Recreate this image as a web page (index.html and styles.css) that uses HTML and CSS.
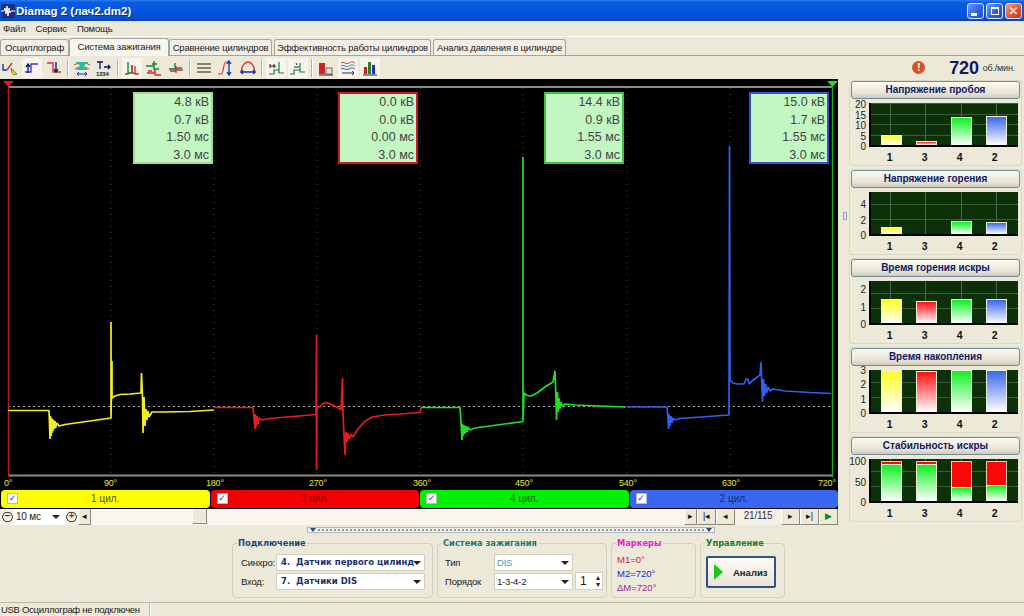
FILE: index.html
```html
<!DOCTYPE html>
<html>
<head>
    <meta charset="utf-8">
    <title>Diamag 2</title>
    <link rel="stylesheet" href="styles.css">
</head>
<body>
    <div class="titlebar">
        <svg class="appicon" width="14" height="14" viewBox="0 0 14 14"><rect width="14" height="14" fill="#1c2f78"/><path d="M0 7H3L4 4 5 10 6 2 7 12 8 4 9 9 10 7H14" stroke="#fff" fill="none"/></svg>
        <span class="title">Diamag 2 (лач2.dm2)</span>
        <div class="winbtns">
            <div class="winbtn"><i class="min"></i></div>
            <div class="winbtn"><i class="max"></i></div>
            <div class="winbtn close">✕</div>
        </div>
    </div>
    <div class="menu"><span>Файл</span><span>Сервис</span><span>Помощь</span></div>
    <div class="tabs">
        <div class="tab t1">Осциллограф</div>
        <div class="tab t2 active">Система зажигания</div>
        <div class="tab t3">Сравнение цилиндров</div>
        <div class="tab t4">Эффективность работы цилиндров</div>
        <div class="tab t5">Анализ давления в цилиндре</div>
    </div>
    <div class="toolbar">
        <div class="tools">
            <svg class="ico" viewBox="0 0 16 16"><path d="M1 4V10H5" stroke="#2030c0" fill="none" stroke-width="1.4"/><path d="M5 10L10 3" stroke="#d03030" fill="none" stroke-width="1.4"/><path d="M9 8L15 14 12 15 10 13Z" fill="#f0d020" stroke="#555" stroke-width=".7"/></svg>
            <svg class="ico on" viewBox="0 0 16 16"><path d="M1 12H7V4H14" stroke="#3040d0" fill="none" stroke-width="1.4"/><path d="M4 13V5M2 7L4 4 6 7" stroke="#101060" fill="none" stroke-width="1.3"/></svg>
            <svg class="ico" viewBox="0 0 16 16"><path d="M1 3H7V12H15" stroke="#e03030" fill="none" stroke-width="1.4"/><path d="M10 2V11M8 9L10 12 12 9" stroke="#101060" fill="none" stroke-width="1.3"/></svg>
            <i class="sep"></i>
            <svg class="ico" viewBox="0 0 16 16"><path d="M2 2H14L10 6 14 10H2L6 6Z" fill="#20c0a0"/><path d="M0 5L4 3M16 5L12 3M1 9L5 7M15 9L11 7" stroke="#d04040"/><path d="M3 14H13M3 14L5 12M3 14L5 15.500M13 14L11 12M13 14L11 15.500" stroke="#1030c0" fill="none"/></svg>
            <svg class="ico" viewBox="0 0 16 16"><path d="M1 2H7M4 2V9M8 7H14M12 5L14 7 12 9" stroke="#101060" fill="none" stroke-width="1.3"/><text x="0" y="15.500" class="tinytext">1234</text></svg>
            <i class="sep"></i>
            <svg class="ico on" viewBox="0 0 16 16"><path d="M1 14H4V2V13H8V5" stroke="#108030" fill="none" stroke-width="1.3"/><path d="M8 5V13H11V6V14H15" stroke="#d03030" fill="none" stroke-width="1.3"/></svg>
            <svg class="ico" viewBox="0 0 16 16"><path d="M0 6H8V1V9H13M6 4H11" stroke="#108030" fill="none" stroke-width="1.3"/><path d="M1 13H8L9 10V15H15M2 11H6" stroke="#d03030" fill="none" stroke-width="1.3"/></svg>
            <svg class="ico" viewBox="0 0 16 16"><path d="M1 9H7V3V8H14" stroke="#108030" fill="none" stroke-width="1.3"/><path d="M2 11H8V6V13M8 10H15" stroke="#d03030" fill="none" stroke-width="1.3"/></svg>
            <i class="sep"></i>
            <svg class="ico" viewBox="0 0 16 16"><path d="M1 4H15M1 8H15M1 12H15" stroke="#665f50" stroke-width="1.5"/></svg>
            <svg class="ico" viewBox="0 0 16 16"><path d="M0 14H3C6 14 5 2 8 2H12" stroke="#e03030" fill="none" stroke-width="1.2"/><path d="M11 2V14M9 4L11 1 13 4M9 12L11 15 13 12" stroke="#1030c0" fill="none" stroke-width="1.3"/></svg>
            <svg class="ico" viewBox="0 0 16 16"><path d="M1 13C2 4 5 2 8 2S14 4 15 13" stroke="#e03030" fill="none" stroke-width="1.3"/><path d="M1 12H15M3 10L1 12 3 14M13 10L15 12 13 14" stroke="#1030c0" fill="none" stroke-width="1.3"/></svg>
            <i class="sep"></i>
            <svg class="ico on" viewBox="0 0 16 16"><path d="M1 14H6V10H11V2V13H16" stroke="#108050" fill="none" stroke-width="1.2"/><path d="M2 4V8M6 4V8M2 6H8" stroke="#202020" fill="none"/></svg>
            <svg class="ico on" viewBox="0 0 16 16"><path d="M0 14H4V10H10V3V12H15" stroke="#108050" fill="none" stroke-width="1.2"/><path d="M4 7H9M6 3L7 5" stroke="#202020" fill="none"/></svg>
            <i class="sep"></i>
            <svg class="ico" viewBox="0 0 16 16"><rect x="1" y="3" width="6" height="11" fill="#d02020"/><rect x="8" y="8" width="6" height="6" fill="#e8e4d4" stroke="#333" stroke-width=".7"/><path d="M1 15H15" stroke="#222"/></svg>
            <svg class="ico on" viewBox="0 0 16 16"><path d="M1 3C4 1 6 5 9 3S13 2 15 3" stroke="#d04050" fill="none"/><path d="M1 6C4 4 6 8 9 6S13 5 15 6" stroke="#30a060" fill="none"/><path d="M1 9C4 7 6 11 9 9S13 8 15 9" stroke="#4040d0" fill="none"/><path d="M2 13H14M12 11L14 13 12 15" stroke="#333" fill="none"/></svg>
            <svg class="ico on" viewBox="0 0 16 16"><rect x="2" y="7" width="3" height="7" fill="#d02020"/><rect x="6" y="2" width="3" height="12" fill="#208030"/><rect x="10" y="5" width="3" height="9" fill="#2030c0"/><path d="M1 15H15" stroke="#222"/></svg>
        </div>
        <div class="rpm">
            <span class="warn">!</span>
            <b>720</b>
            <small>об./мин.</small>
        </div>
    </div>

    <div class="main">
        <div class="scopecol">
            <div class="scope">
                <svg class="wave" width="838" height="410" viewBox="0 79 838 410">
                    <path d="M8 87H832M8 475.500H832" stroke="#8a8a8a" stroke-width="2"/>
                    <path d="M111 88V475M214 88V475M317 88V475M420.500 88V475M523 88V475M627 88V475M730 88V475" stroke="#4c4c4c" stroke-dasharray="1 5"/>
                    <path d="M8 406.500H832" stroke="#b0b0b0" stroke-dasharray="2 3"/>
                    <path d="M8.500 87V476" stroke="#c01818" stroke-width="1.400"/>
                    <path d="M832.500 87V477" stroke="#18b018" stroke-width="1.400"/>
                    <path d="M3 81H14L8.500 87Z" fill="#e01818"/>
                    <path d="M827 81H838L832.500 87Z" fill="#20e020"/>
                    <path class="sig" stroke="#f0f020" d="M8 410.500H49L49.500 424 50 439 50.500 416 51 436 51.500 418 52 433 52.500 419 53 431 53.500 420 54 429 55 421 55.500 428 57 423 59 426 65 424.500 111 418 111 322 111 418 112 361 112 398 115 396 120 394.500 130 394 141 393 141.500 373 142.500 398 143 433 144 397 145 426 146 409 147 420 148 411 149 417 152 412 160 412 190 411.500 214 410"/>
                    <path class="sig" stroke="#e81c1c" d="M214 407.500H253L254 418 255 429 255.500 414 256 427 257 416 258 424 259 418 262 420 270 418.500 316 414.500 316.500 335 316.500 470 317 407 320 407 323 403.500 326 402.500 330 404 336 406.500 341 410 342.500 378 343 414 345 455 346 432 347 442 348 433 349 439 351 434 353 437 358 429 364 422 372 417 385 415 400 414 420 412.500 421 408"/>
                    <path class="sig" stroke="#20e020" d="M421 407.500H460L461 422 462 440 462.500 424 463 436 464 425 465 434 466 426 467 432 468 427 470 430 475 428 523 421.500 523 157 523 420 524 393 527 395.500 531 396 537 393 541 390 545 387 548 385 553 382 555 371 556 400 556.500 420 557.500 392 558 412 559 398 560 409 561 402 562 406 565 404 575 405 600 406 626 407"/>
                    <path class="sig" stroke="#3060f0" d="M627 407H667L668 418 668.500 429 669 414 670 426 671 416 672 423 673 418 675 420 680 418.500 729 415 729.500 146 730 380 733 383 737 384 744 384 746 379 748 379 749 384 752 381 760 375 761 362 762 390 762.500 402 763.500 379 764.500 396 765.500 384 766.500 393 768 387 770 391 773 389 785 391 810 392.500 831 393.500"/>
                    <g class="deg">
                        <text x="4" y="486">0°</text>
                        <text x="104" y="486">90°</text>
                        <text x="206" y="486">180°</text>
                        <text x="309" y="486">270°</text>
                        <text x="413" y="486">360°</text>
                        <text x="515" y="486">450°</text>
                        <text x="619" y="486">540°</text>
                        <text x="722" y="486">630°</text>
                        <text x="818" y="486">720°</text>
                    </g>
                </svg>
                <div class="info i1"><p>4.8 кВ</p><p>0.7 кВ</p><p>1.50 мс</p><p>3.0 мс</p></div>
                <div class="info i2"><p>0.0 кВ</p><p>0.0 кВ</p><p>0.00 мс</p><p>3.0 мс</p></div>
                <div class="info i3"><p>14.4 кВ</p><p>0.9 кВ</p><p>1.55 мс</p><p>3.0 мс</p></div>
                <div class="info i4"><p>15.0 кВ</p><p>1.7 кВ</p><p>1.55 мс</p><p>3.0 мс</p></div>
            </div>
            <div class="cyls">
                <div class="cyl yellow"><i class="check">✓</i>1 цил.</div>
                <div class="cyl red"><i class="check">✓</i>3 цил.</div>
                <div class="cyl green"><i class="check">✓</i>4 цил.</div>
                <div class="cyl blue"><i class="check">✓</i>2 цил.</div>
            </div>
            <div class="scrollrow">
                <div class="zoombtn">−</div>
                <div class="msbox">10 мс<i class="arrow"></i></div>
                <div class="zoombtn plus">+</div>
                <div class="navbtn small">◂</div>
                <div class="track"><div class="thumb"></div></div>
                <div class="navbtn small">▸</div>
                <div class="navbtn">|◂</div>
                <div class="navbtn">◂</div>
                <div class="pos">21/115</div>
                <div class="navbtn">▸</div>
                <div class="navbtn">▸|</div>
                <div class="navbtn play">▶</div>
            </div>
        </div>
        <div class="vsplit"><i></i></div>
        <div class="charts">
            <div class="card">
                <div class="cardbtn">Напряжение пробоя</div>
                <div class="chart">
                    <div class="yaxis top-a"><span>20</span><span>15</span><span>10</span><span>5</span><span>0</span></div>
                    <div class="plot rows-a">
                        <div class="bar b-y" style="height:10px"></div>
                        <div class="bar b-r" style="height:4px"></div>
                        <div class="bar b-g" style="height:28px"></div>
                        <div class="bar b-b" style="height:29px"></div>
                    </div>
                </div>
                <div class="xaxis"><span>1</span><span>3</span><span>4</span><span>2</span></div>
            </div>
            <div class="card">
                <div class="cardbtn">Напряжение горения</div>
                <div class="chart">
                    <div class="yaxis top-b"><span>4</span><span>2</span><span>0</span></div>
                    <div class="plot rows-b">
                        <div class="bar b-y" style="height:7px"></div>
                        <div class="bar none"></div>
                        <div class="bar b-g" style="height:13px"></div>
                        <div class="bar b-b" style="height:12px"></div>
                    </div>
                </div>
                <div class="xaxis"><span>1</span><span>3</span><span>4</span><span>2</span></div>
            </div>
            <div class="card">
                <div class="cardbtn">Время горения искры</div>
                <div class="chart">
                    <div class="yaxis top-c"><span>2</span><span>1</span><span>0</span></div>
                    <div class="plot rows-c">
                        <div class="bar b-y" style="height:24px"></div>
                        <div class="bar b-r" style="height:22px"></div>
                        <div class="bar b-g" style="height:24px"></div>
                        <div class="bar b-b" style="height:24px"></div>
                    </div>
                </div>
                <div class="xaxis"><span>1</span><span>3</span><span>4</span><span>2</span></div>
            </div>
            <div class="card">
                <div class="cardbtn">Время накопления</div>
                <div class="chart">
                    <div class="yaxis top-d"><span>3</span><span>2</span><span>1</span><span>0</span></div>
                    <div class="plot rows-d">
                        <div class="bar b-y" style="height:42px"></div>
                        <div class="bar b-r" style="height:41px"></div>
                        <div class="bar b-g" style="height:42px"></div>
                        <div class="bar b-b" style="height:42px"></div>
                    </div>
                </div>
                <div class="xaxis"><span>1</span><span>3</span><span>4</span><span>2</span></div>
            </div>
            <div class="card">
                <div class="cardbtn">Стабильность искры</div>
                <div class="chart">
                    <div class="yaxis top-e"><span>100</span><span>50</span><span>0</span></div>
                    <div class="plot rows-e">
                        <div class="stack"><div class="bad" style="height:3px"></div><div class="bar b-g" style="height:37px"></div></div>
                        <div class="stack"><div class="bad" style="height:3px"></div><div class="bar b-g" style="height:37px"></div></div>
                        <div class="stack"><div class="bad" style="height:26px"></div><div class="bar b-g" style="height:14px"></div></div>
                        <div class="stack"><div class="bad" style="height:24px"></div><div class="bar b-g" style="height:16px"></div></div>
                    </div>
                </div>
                <div class="xaxis"><span>1</span><span>3</span><span>4</span><span>2</span></div>
            </div>
        </div>
    </div>

    <div class="hsplit"><i class="down"></i><span></span><i class="down"></i></div>

    <div class="panels">
        <fieldset class="group g-conn">
            <legend>Подключение</legend>
            <div class="row"><label>Синхро:</label><div class="select strong"><span>4.&nbsp; Датчик первого цилинд</span><i class="arrow"></i></div></div>
            <div class="row"><label>Вход:</label><div class="select strong"><span>7.&nbsp; Датчики DIS</span><i class="arrow"></i></div></div>
        </fieldset>
        <fieldset class="group g-ign">
            <legend>Система зажигания</legend>
            <div class="row"><label>Тип</label><div class="select short dis"><span>DIS</span><i class="arrow"></i></div></div>
            <div class="row"><label>Порядок</label><div class="select short"><span>1-3-4-2</span><i class="arrow"></i></div><div class="spin">1<em>▴<br>▾</em></div></div>
        </fieldset>
        <fieldset class="group g-mark">
            <legend>Маркеры</legend>
            <p class="m1">M1=0°</p>
            <p class="m2">M2=720°</p>
            <p class="m3">ΔM=720°</p>
        </fieldset>
        <fieldset class="group g-ctl">
            <legend>Управление</legend>
            <div class="runbtn"><i></i><b>Анализ</b></div>
        </fieldset>
    </div>

    <div class="status"><div class="cell">USB Осциллограф не подключен</div><div class="cell rest"></div></div>
</body>
</html>
```
FILE: styles.css
```css
* {
    box-sizing: border-box;
}
html, body {
    margin: 0;
    height: 100%;
}
body {
    width: 1024px;
    height: 616px;
    overflow: hidden;
    background: #ece9d8;
    color: #222;
    font-family: "Liberation Sans", Arial, sans-serif;
    font-size: 9.500px;
    letter-spacing: -.2px;
}
i, em {
    font-style: normal;
}

/* window title */
.titlebar {
    height: 21px;
    display: flex;
    align-items: center;
    padding: 0 2px 0 1px;
    background: linear-gradient(#2a7cf0 0, #0a5be0 12%, #0356e0 60%, #0a4cc8 92%, #0a3fa8 100%);
    color: #fff;
}
.appicon {
    margin-right: 1px;
}
.title {
    font-weight: bold;
    font-size: 11.500px;
    letter-spacing: 0;
    text-shadow: 1px 1px #0a2a90;
}
.winbtns {
    margin-left: auto;
    display: flex;
    gap: 2px;
}
.winbtn {
    width: 17px;
    height: 16px;
    border: 1px solid #dbe6ff;
    border-radius: 3px;
    background: linear-gradient(135deg, #6f98f2, #2c5fe0 60%, #2450c8);
    position: relative;
}
.winbtn .min {
    position: absolute;
    left: 3px;
    bottom: 2px;
    width: 6px;
    height: 3px;
    background: #fff;
}
.winbtn .max {
    position: absolute;
    left: 4px;
    top: 3px;
    width: 8px;
    height: 8px;
    border: 1px solid #fff;
    border-top-width: 2px;
}
.close {
    background: linear-gradient(135deg, #f0a080, #e05030 60%, #c03818);
    color: #fff;
    font-size: 12px;
    line-height: 14px;
    text-align: center;
    font-family: "DejaVu Sans", sans-serif;
    font-weight: bold;
}

/* menu + tabs */
.menu {
    height: 16px;
    display: flex;
    align-items: center;
    gap: 10px;
    padding-left: 3px;
    border-bottom: 1px solid #fff;
}
.tabs {
    height: 19px;
    display: flex;
    align-items: flex-end;
    padding-top: 2px;
    border-bottom: 1px solid #a8a498;
}
.tab {
    height: 16px;
    line-height: 15px;
    text-align: center;
    border: 1px solid #a8a498;
    border-bottom: 0;
    border-radius: 3px 3px 0 0;
    background: #f2f0e6;
    white-space: nowrap;
}
.t1 {
    width: 69px;
}
.t2 {
    width: 100px;
}
.t3 {
    width: 103px;
    margin-right: 2px;
}
.t4 {
    width: 157px;
    margin-right: 2px;
}
.t5 {
    width: 133px;
}
.tab.active {
    height: 18px;
    line-height: 16px;
    background: #f7f6ee;
    margin-bottom: -1px;
    position: relative;
}

/* toolbar */
.toolbar {
    height: 23px;
    display: flex;
    align-items: center;
    justify-content: space-between;
    padding-left: 2px;
}
.tools {
    display: flex;
    align-items: center;
    gap: 6px;
}
.ico {
    width: 16px;
    height: 16px;
}
.ico.on {
    background: #f6f4ec;
    outline: 2px solid #f6f4ec;
}
.tinytext {
    font-size: 6px;
    font-weight: bold;
    fill: #222;
}
.sep {
    width: 2px;
    height: 18px;
    margin: 0 -1px;
    background: #b8b4a4;
    border-right: 1px solid #fff;
}
.rpm {
    display: flex;
    align-items: center;
    padding-right: 9px;
}
.warn {
    width: 13px;
    height: 13px;
    border-radius: 50%;
    background: #d85020;
    color: #fff;
    font-weight: bold;
    font-size: 11px;
    line-height: 13px;
    text-align: center;
    margin-right: 24px;
}
.rpm b {
    font-size: 18px;
    line-height: 22px;
    color: #101868;
    margin-right: 4px;
}
.rpm small {
    font-size: 9px;
    color: #333;
}

/* main area */
.main {
    height: 446px;
    display: flex;
}
.scopecol {
    width: 838px;
    display: flex;
    flex-direction: column;
}
.scope {
    height: 410px;
    background: #000;
    position: relative;
}
.wave {
    display: block;
}
.sig {
    fill: none;
    stroke-width: 1.700;
    stroke-linejoin: bevel;
}
.deg text {
    fill: #e4e440;
    font-size: 9px;
}
.info {
    position: absolute;
    top: 13px;
    width: 80px;
    height: 72px;
    padding: 0 2px 0 0;
    background: #c2f7c2;
    border: 2px solid;
    text-align: right;
    font-size: 12.500px;
    letter-spacing: 0;
    color: #444;
}
.info p {
    margin: 0;
    line-height: 17.500px;
}
.i1 {
    left: 133px;
    border-color: #a8d890;
}
.i2 {
    left: 338px;
    border-color: #d01818;
}
.i3 {
    left: 544px;
    border-color: #40c040;
}
.i4 {
    left: 749px;
    border-color: #3050d0;
}

.cyls {
    height: 20px;
    display: flex;
    gap: 1px;
    padding: 1px 0 1px 1px;
    background: #000;
}
.cyl {
    flex: 1;
    position: relative;
    text-align: center;
    font-size: 10px;
    letter-spacing: 0;
    line-height: 17px;
    border-radius: 4px;
}
.yellow {
    background: #ffff00;
    color: #555500;
}
.red {
    background: #f40000;
    color: #8a0000;
}
.green {
    background: #00f000;
    color: #006000;
}
.blue {
    background: #3868f0;
    color: #102a80;
}
.check {
    position: absolute;
    left: 6px;
    top: 3px;
    width: 11px;
    height: 11px;
    background: #fff;
    border: 1px solid #b0b8c8;
    color: #2040b0;
    font-size: 9px;
    font-weight: bold;
    line-height: 9px;
    font-family: "DejaVu Sans", sans-serif;
}

.scrollrow {
    height: 16px;
    display: flex;
    align-items: stretch;
    background: #f4f2e8;
    font-size: 10px;
}
.zoombtn {
    width: 13px;
    margin-left: 1px;
    padding-top: 2px;
    color: #333;
    font-weight: bold;
    line-height: 10px;
    text-align: center;
    background: radial-gradient(circle at 50% 50%, transparent 4px, #444 4.500px, #444 5px, transparent 5.500px);
}
.zoombtn.plus {
    color: #c01818;
    margin: 0;
}
.msbox {
    width: 51px;
    background: #fff;
    padding-left: 2px;
    line-height: 15px;
    position: relative;
}
.arrow {
    position: absolute;
    right: 5px;
    top: 6px;
    border: 4px solid transparent;
    border-top-color: #222;
    border-bottom: 0;
}
.navbtn {
    width: 19px;
    font-size: 9px;
    line-height: 14px;
    text-align: center;
    background: #ece9d8;
    border-right: 1px solid #8c8878;
    border-bottom: 1px solid #8c8878;
    border-left: 1px solid #fff;
    color: #111;
    white-space: nowrap;
}
.navbtn.small {
    width: 13px;
}
.play {
    color: #108810;
}
.track {
    flex: 1;
    position: relative;
    background: #f8f6ee;
}
.thumb {
    position: absolute;
    left: 102px;
    top: 0;
    width: 14px;
    height: 15px;
    background: #ece9d8;
    border-right: 1px solid #8c8878;
    border-bottom: 1px solid #8c8878;
}
.pos {
    width: 46px;
    text-align: center;
    line-height: 14px;
    color: #333;
}

.vsplit {
    width: 11px;
    position: relative;
}
.vsplit i {
    position: absolute;
    left: 5px;
    top: 133px;
    width: 4px;
    height: 8px;
    background: #d8e0e8;
    border: 1px solid #9aa4b0;
}

/* right charts */
.charts {
    width: 175px;
    padding-top: 1px;
    display: flex;
    flex-direction: column;
    gap: 3px;
}
.card {
    width: 173px;
    height: 86px;
    border: 1px solid #dcd8c8;
    border-radius: 3px;
    position: relative;
}
.cardbtn {
    height: 18px;
    margin: 0 1px;
    text-align: center;
    font-weight: bold;
    font-size: 10px;
    letter-spacing: 0;
    line-height: 16px;
    color: #101868;
    background: linear-gradient(#fbfaf4, #e8e4d4 70%, #cfcab8);
    border: 1px solid #6f8c98;
    border-radius: 3px;
}
.chart {
    display: flex;
    padding-top: 4px;
}
.yaxis {
    width: 19px;
    height: 54px;
    margin: -5px 0;
    display: flex;
    flex-direction: column;
    justify-content: space-between;
    align-items: flex-end;
    padding-right: 3px;
    font-size: 10px;
    letter-spacing: 0;
    line-height: 10px;
    color: #222;
}
.top-a {
    padding-top: 2px;
}
.top-b {
    padding-top: 13px;
}
.top-c {
    padding-top: 9px;
}
.top-d {
    padding-top: 1px;
}
.top-e {
    padding-top: 3px;
}
.plot {
    width: 149px;
    height: 44px;
    padding-left: 10px;
    display: flex;
    align-items: flex-end;
    gap: 14px;
    background-color: #0c3008;
    border-bottom: 2px solid #000;
    border-left: 2px solid #000;
}
.rows-a {
    background-image:
        linear-gradient(90deg, transparent 19px, #4a6a48 19px, #4a6a48 20px, transparent 20px, transparent 54px, #4a6a48 54px, #4a6a48 55px, transparent 55px, transparent 90px, #4a6a48 90px, #4a6a48 91px, transparent 91px, transparent 125px, #4a6a48 125px, #4a6a48 126px, transparent 126px),
        repeating-linear-gradient(0deg, transparent 0, transparent 9px, #3c5c3a 9px, #3c5c3a 10px, transparent 10px, transparent 10.500px);
}
.rows-b, .rows-c, .rows-d, .rows-e {
    background-image:
        linear-gradient(90deg, transparent 19px, #4a6a48 19px, #4a6a48 20px, transparent 20px, transparent 54px, #4a6a48 54px, #4a6a48 55px, transparent 55px, transparent 90px, #4a6a48 90px, #4a6a48 91px, transparent 91px, transparent 125px, #4a6a48 125px, #4a6a48 126px, transparent 126px),
        repeating-linear-gradient(0deg, transparent 0, transparent 14px, #3c5c3a 14px, #3c5c3a 15px);
}
.bar {
    width: 21px;
    flex: none;
    border: 1px solid #eef0dc;
    border-bottom: 0;
}
.bar.none {
    border: 0;
}
.b-y {
    background: linear-gradient(#ffff20, #fff);
}
.b-r {
    background: linear-gradient(#ff1010, #fff);
}
.b-g {
    background: linear-gradient(#10f020, #fff);
}
.b-b {
    background: linear-gradient(#3868f0, #fff);
}
.stack {
    width: 21px;
}
.stack .bar {
    width: 100%;
}
.bad {
    background: #fa0808;
    border: 1px solid #eec8b0;
    border-bottom: 0;
}
.xaxis {
    display: flex;
    padding: 4px 0 0 29px;
    gap: 14px;
}
.xaxis span {
    width: 21px;
    text-align: center;
    font-weight: bold;
    font-size: 10.500px;
    line-height: 12px;
    color: #111;
}

/* bottom */
.hsplit {
    width: 408px;
    height: 6px;
    margin: 2px 0 0 307px;
    display: flex;
    align-items: center;
    background: #f4f2e8;
    border: 1px solid #b0b8c0;
}
.hsplit span {
    flex: 1;
    height: 2px;
    border-top: 2px dotted #8a94a0;
}
.hsplit .down {
    margin: 0 2px;
    border: 3px solid transparent;
    border-top: 4px solid #2c4c88;
    border-bottom: 0;
}
.panels {
    height: 64px;
    margin-top: 5px;
    padding-left: 232px;
    display: flex;
    gap: 4px;
}
.group {
    margin: 0;
    padding: 4px 0 0 5px;
    height: 60px;
    border: 1px solid #d4d0c0;
    border-radius: 4px;
}
.group legend {
    padding: 0 1px;
    margin-left: -1px;
    font-family: "DejaVu Sans", sans-serif;
    font-weight: bold;
    font-size: 8.300px;
    letter-spacing: 0;
    line-height: 11px;
}
.group p {
    margin: 0;
    line-height: 14px;
    font-size: 9.500px;
    letter-spacing: 0;
}
.g-conn {
    width: 201px;
}
.g-conn legend {
    color: #1c4480;
}
.g-ign {
    width: 170px;
}
.g-ign legend {
    color: #1a7a78;
}
.g-mark {
    width: 85px;
}
.g-mark legend {
    color: #ee20d0;
}
.m1 {
    color: #d82828;
}
.m2 {
    color: #2828c8;
}
.m3 {
    color: #a02898;
}
.g-ctl {
    width: 85px;
}
.g-ctl legend {
    color: #1c8020;
}
.row {
    display: flex;
    align-items: center;
    height: 18px;
    margin-bottom: 1px;
}
.row label {
    width: 38px;
    padding-left: 3px;
}
.g-ign .row label {
    width: 51px;
    padding-left: 2px;
}
.select {
    width: 149px;
    height: 17px;
    line-height: 15px;
    padding-left: 4px;
    background: #fff;
    border: 1px solid #d4d0c0;
    position: relative;
    overflow: hidden;
    white-space: nowrap;
}
.select .arrow {
    right: 3px;
    background: transparent;
}
.select span {
    display: block;
    overflow: hidden;
    width: calc(100% - 10px);
}
.strong {
    font-family: "DejaVu Sans", sans-serif;
    font-weight: bold;
    font-size: 8.500px;
    letter-spacing: 0;
    color: #1c3070;
}
.short {
    width: 79px;
    padding-left: 2px;
}
.dis {
    color: #48a0b0;
}
.spin {
    width: 28px;
    height: 18px;
    margin-left: 2px;
    padding-left: 4px;
    display: flex;
    justify-content: space-between;
    line-height: 16px;
    font-size: 12px;
    background: #fff;
    border: 1px solid #d4d0c0;
}
.spin em {
    font-size: 8px;
    line-height: 7px;
    padding: 1px 2px 0 0;
}
.runbtn {
    width: 70px;
    height: 32px;
    margin-top: 3px;
    display: flex;
    align-items: center;
    gap: 10px;
    padding-left: 6px;
    background: linear-gradient(#fcfbf6, #e8e4d6);
    border: 2px solid #2c5488;
    border-radius: 2px;
    font-size: 9.500px;
    letter-spacing: 0;
}
.runbtn i {
    border: 7px solid transparent;
    border-left: 9px solid #18c818;
    border-right: 0;
    height: 0;
    border-top-width: 8px;
    border-bottom-width: 8px;
}
.status {
    height: 14px;
    display: flex;
    border-top: 1px solid #bdb9a8;
    letter-spacing: -.3px;
    line-height: 14px;
}
.cell {
    width: 150px;
    padding-left: 1px;
    border-right: 1px solid #bdb9a8;
    white-space: nowrap;
}
.rest {
    flex: 1;
    border: 0;
    border-left: 1px solid #fff;
}
```
